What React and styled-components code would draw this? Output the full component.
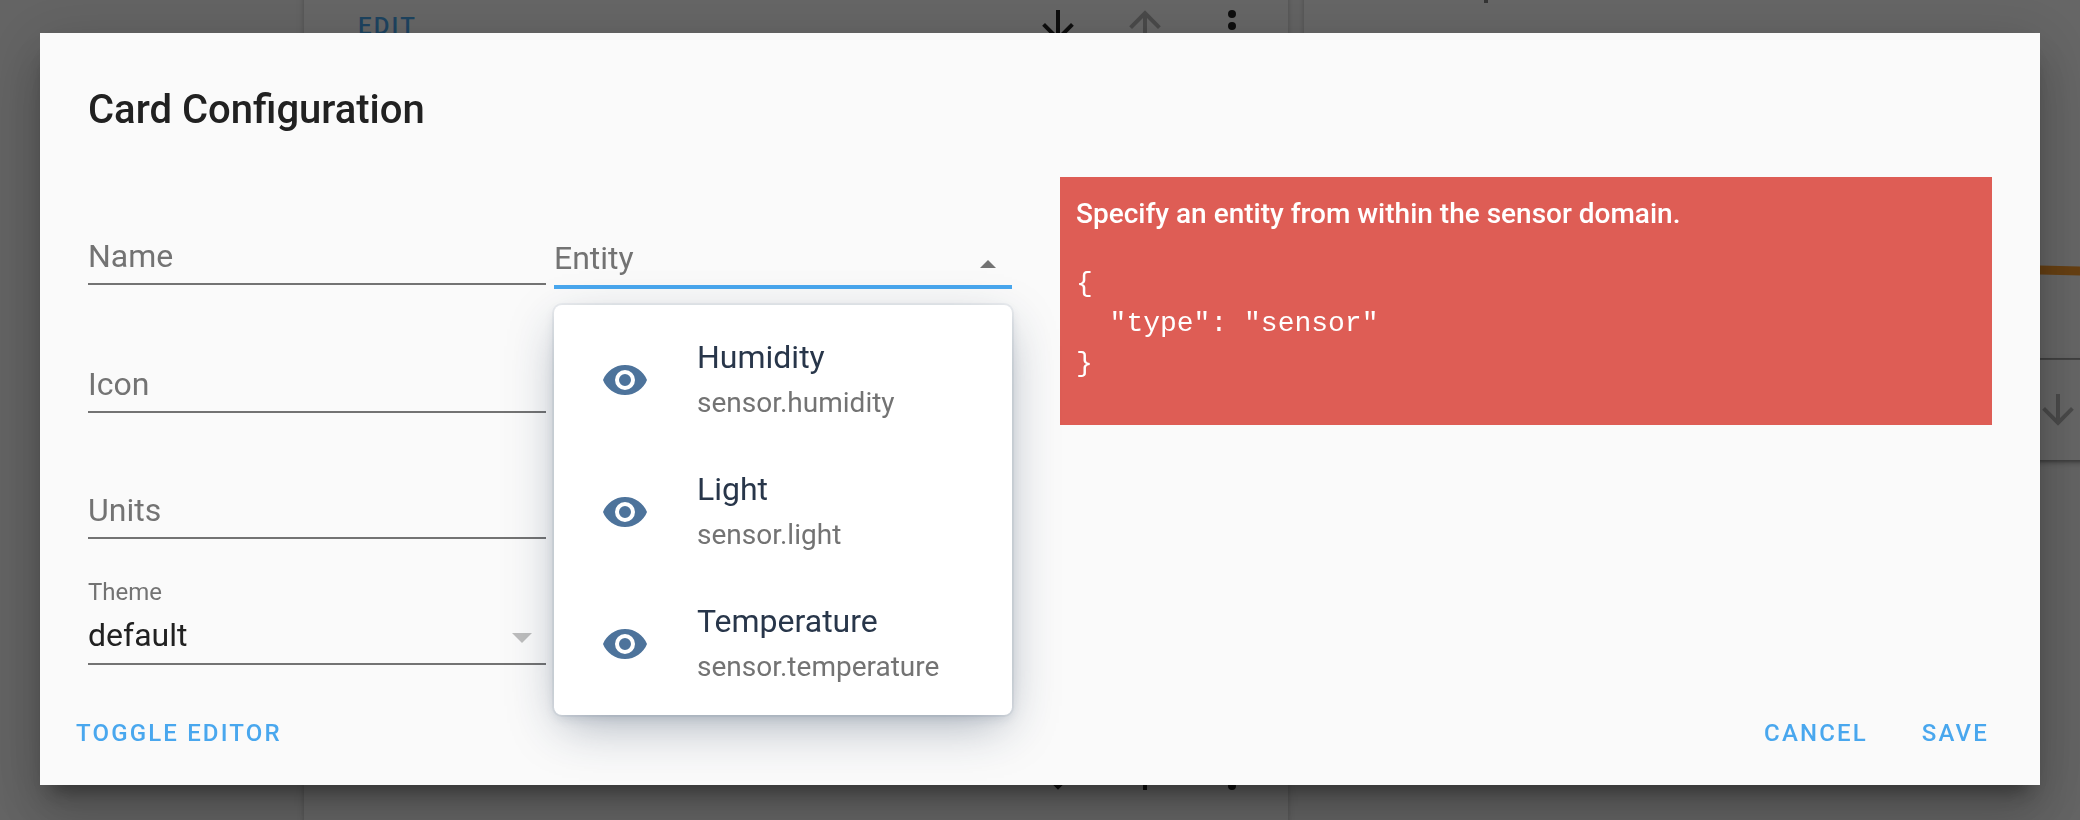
import React, { useState } from "react";
import styled, { createGlobalStyle } from "styled-components";

const GlobalStyle = createGlobalStyle`
  *, *::before, *::after { box-sizing: border-box; }
  body {
    margin: 0;
    background: #fafafa;
    color: #212121;
    font-family: Roboto, "Liberation Sans", sans-serif;
    overflow: hidden;
  }
  button, input, select { font-family: inherit; }
`;

const accent = "#49a7ee";
const muted = "#737373";

/* ---------- dashboard behind the dialog ---------- */

const Dashboard = styled.main`
  display: flex;
  gap: 16px;
  margin-top: -24px;
  padding-left: 304px;
  height: calc(100vh + 24px);
  overflow: hidden;
`;

const Column = styled.div`
  flex: 0 0 984px;
  display: flex;
  flex-direction: column;
  gap: 2px;
`;

const Panel = styled.section`
  background: #fff;
  flex: none;
  box-shadow: 0 4px 4px rgba(0, 0, 0, 0.14), 0 2px 10px rgba(0, 0, 0, 0.12),
    0 6px 2px -4px rgba(0, 0, 0, 0.2);
`;

const PanelBody = styled.div`
  height: 648px;
`;

const Toolbar = styled.div`
  display: flex;
  align-items: center;
  height: 100px;
  padding: 0 32px 0 42px;
`;

const Spacer = styled.div`
  flex: 1;
`;

const IconButton = styled.button`
  display: flex;
  margin-left: 39px;
  padding: 0;
  border: 0;
  background: none;
  color: ${(p) => (p.$faded ? "#b8b8b8" : "#222")};
`;

const Chart = styled.svg`
  display: block;
  width: 100%;
  height: 382px;
`;

/* ---------- dialog ---------- */

const Overlay = styled.div`
  position: fixed;
  inset: 0;
  display: flex;
  align-items: center;
  padding: 33px 40px 35px;
  background: rgba(0, 0, 0, 0.6);
`;

const Dialog = styled.form`
  flex: 1;
  min-width: 0;
  background: #fafafa;
  box-shadow: 0 32px 48px 4px rgba(0, 0, 0, 0.14),
    0 12px 60px 10px rgba(0, 0, 0, 0.12), 0 16px 20px -10px rgba(0, 0, 0, 0.4);
`;

const Title = styled.h2`
  margin: 0;
  padding: 48px 48px 38px;
  font-size: 40px;
  line-height: 58px;
  font-weight: 500;
`;

const Content = styled.div`
  display: grid;
  grid-template-columns: 1fr 1fr;
  gap: 40px;
  align-items: start;
  padding: 0 48px;
`;

const Editor = styled.div`
  display: grid;
  grid-template-columns: 1fr 1fr;
  gap: 32px 8px;
  align-items: start;
  padding: 14px 8px 0 0;
`;

const Field = styled.div`
  position: relative;
  grid-column: ${(p) => p.$column || 1};
  margin-top: ${(p) => (p.$active ? 2 : 0)}px;
  padding-bottom: 4px;
  border-bottom: 2px solid ${(p) => (p.$active ? accent : muted)};
  box-shadow: ${(p) => (p.$active ? `0 2px 0 ${accent}` : "none")};
`;

const Caption = styled.label`
  display: block;
  height: 40px;
  font-size: 24px;
  line-height: 42px;
  color: ${muted};
`;

const TextInput = styled.input`
  display: block;
  width: 100%;
  height: 48px;
  padding: 2px 0 0;
  border: 0;
  outline: 0;
  background: none;
  color: #212121;
  font-size: 32px;
  &::placeholder { color: ${muted}; opacity: 1; }
`;

const Select = styled.select`
  display: block;
  width: 100%;
  height: 48px;
  padding: 0;
  border: 0;
  outline: 0;
  appearance: none;
  background: none;
  color: #212121;
  font-size: 32px;
`;

const SelectArrow = styled.svg`
  position: absolute;
  right: 14px;
  bottom: 20px;
  pointer-events: none;
`;

const ComboToggle = styled.button`
  position: absolute;
  right: 16px;
  bottom: 17px;
  display: flex;
  padding: 0;
  border: 0;
  background: none;
`;

const Options = styled.ul`
  position: absolute;
  z-index: 1;
  top: calc(100% + 20px);
  left: 0;
  right: 0;
  margin: 0;
  padding: 9px 0 5px;
  list-style: none;
  background: #fff;
  border-radius: 8px;
  box-shadow: 0 0 0 2px hsla(214, 61%, 25%, 0.05),
    0 4px 12px -2px hsla(214, 53%, 23%, 0.16),
    0 16px 48px -8px hsla(214, 47%, 21%, 0.38);
`;

const Option = styled.li`
  display: flex;
  align-items: center;
  gap: 48px;
  height: 132px;
  padding-left: 47px;
  color: #4d739b;
`;

const OptionText = styled.div`
  display: flex;
  flex-direction: column;
  padding-bottom: 2px;
`;

const Primary = styled.span`
  font-size: 32px;
  line-height: 48px;
  color: #28364a;
`;

const Secondary = styled.span`
  font-size: 28px;
  line-height: 44px;
  color: ${muted};
`;

const ErrorCard = styled.section`
  padding: 16px;
  background: #de5d55;
  color: #fff;
  font-size: 28px;
  line-height: 40px;
`;

const ErrorMessage = styled.p`
  margin: 0;
  line-height: 42px;
  font-weight: 500;
`;

const ErrorConfig = styled.pre`
  margin: 29px 0 25px;
  font-family: "Liberation Mono", monospace;
`;

const Actions = styled.footer`
  display: flex;
  gap: 30px;
  padding: 42px 39px 26px 24px;
`;

const TextButton = styled.button`
  padding: 12px;
  border: 0;
  background: none;
  color: ${accent};
  font-size: 24px;
  line-height: 28px;
  font-weight: 500;
  letter-spacing: 0.09em;
  text-transform: uppercase;
`;

const paths = {
  down: "M11,4H13V16L18.5,10.5L19.92,11.92L12,19.84L4.08,11.92L5.5,10.5L11,16V4Z",
  up: "M13,20H11V8L5.5,13.5L4.08,12.08L12,4.16L19.92,12.08L18.5,13.5L13,8V20Z",
  dots: "M12,16A2,2 0 0,1 14,18A2,2 0 0,1 12,20A2,2 0 0,1 10,18A2,2 0 0,1 12,16M12,10A2,2 0 0,1 14,12A2,2 0 0,1 12,14A2,2 0 0,1 10,12A2,2 0 0,1 12,10M12,4A2,2 0 0,1 14,6A2,2 0 0,1 12,8A2,2 0 0,1 10,6A2,2 0 0,1 12,4Z",
  eye: "M12,9A3,3 0 0,0 9,12A3,3 0 0,0 12,15A3,3 0 0,0 15,12A3,3 0 0,0 12,9M12,17A5,5 0 0,1 7,12A5,5 0 0,1 12,7A5,5 0 0,1 17,12A5,5 0 0,1 12,17M12,4.5C7,4.5 2.73,7.61 1,12C2.73,16.39 7,19.5 12,19.5C17,19.5 21.27,16.39 23,12C21.27,7.61 17,4.5 12,4.5Z",
};

const Icon = ({ name }) => (
  <svg width="48" height="48" viewBox="0 0 24 24" fill="currentColor" aria-hidden="true">
    <path d={paths[name]} />
  </svg>
);

const CardToolbar = ({ downFaded, upFaded }) => (
  <Toolbar>
    <TextButton type="button">Edit</TextButton>
    <Spacer />
    <IconButton aria-label="Move card down" $faded={downFaded}><Icon name="down" /></IconButton>
    <IconButton aria-label="Move card up" $faded={upFaded}><Icon name="up" /></IconButton>
    <IconButton aria-label="More options"><Icon name="dots" /></IconButton>
  </Toolbar>
);

const entities = [
  { name: "Humidity", id: "sensor.humidity" },
  { name: "Light", id: "sensor.light" },
  { name: "Temperature", id: "sensor.temperature" },
];

const config = JSON.stringify({ type: "sensor" }, null, 2);

export default function App() {
  const [open, setOpen] = useState(true);
  return (
    <>
      <GlobalStyle />
      <Dashboard inert>
        <Column>
          <Panel>
            <CardToolbar upFaded />
            <PanelBody />
            <CardToolbar />
          </Panel>
        </Column>
        <Column>
          <Panel>
            <Chart viewBox="0 0 984 382" preserveAspectRatio="none" aria-hidden="true">
              <path d="M182 12V27" stroke="#808080" strokeWidth="4" />
              <path d="M100 285L736 294L984 300" fill="none" stroke="#ff9e2e" strokeWidth="9" />
            </Chart>
          </Panel>
          <Panel>
            <CardToolbar downFaded />
          </Panel>
        </Column>
      </Dashboard>

      <Overlay>
        <Dialog
          role="dialog"
          aria-modal="true"
          aria-labelledby="dialog-title"
          onSubmit={(e) => e.preventDefault()}
        >
          <Title id="dialog-title">Card Configuration</Title>
          <Content>
            <Editor>
              <Field>
                <Caption htmlFor="name" aria-label="Name" />
                <TextInput id="name" placeholder="Name" />
              </Field>
              <Field $column={2} $active>
                <Caption htmlFor="entity" aria-label="Entity" />
                <TextInput
                  id="entity"
                  placeholder="Entity"
                  role="combobox"
                  aria-expanded={open}
                  aria-controls="entity-options"
                />
                <ComboToggle type="button" aria-label="Toggle entity list" onClick={() => setOpen(!open)}>
                  <svg width="16" height="8" viewBox="0 0 16 8">
                    <path d="M0 8L8 0L16 8Z" fill={muted} />
                  </svg>
                </ComboToggle>
                {open && (
                  <Options id="entity-options" role="listbox" aria-label="Entities">
                    {entities.map((entity) => (
                      <Option key={entity.id} role="option" aria-selected="false">
                        <Icon name="eye" />
                        <OptionText>
                          <Primary>{entity.name}</Primary>
                          <Secondary>{entity.id}</Secondary>
                        </OptionText>
                      </Option>
                    ))}
                  </Options>
                )}
              </Field>
              <Field>
                <Caption htmlFor="icon" aria-label="Icon" />
                <TextInput id="icon" placeholder="Icon" />
              </Field>
              <Field>
                <Caption htmlFor="units" aria-label="Units" />
                <TextInput id="units" placeholder="Units" />
              </Field>
              <Field>
                <Caption htmlFor="theme">Theme</Caption>
                <Select id="theme" defaultValue="default">
                  <option value="default">default</option>
                </Select>
                <SelectArrow width="20" height="10" viewBox="0 0 20 10" aria-hidden="true">
                  <path d="M0 0H20L10 10Z" fill="#bdbdbd" />
                </SelectArrow>
              </Field>
            </Editor>
            <ErrorCard role="alert">
              <ErrorMessage>Specify an entity from within the sensor domain.</ErrorMessage>
              <ErrorConfig>{config}</ErrorConfig>
            </ErrorCard>
          </Content>
          <Actions>
            <TextButton type="button">Toggle editor</TextButton>
            <Spacer />
            <TextButton type="button">Cancel</TextButton>
            <TextButton type="submit">Save</TextButton>
          </Actions>
        </Dialog>
      </Overlay>
    </>
  );
}
